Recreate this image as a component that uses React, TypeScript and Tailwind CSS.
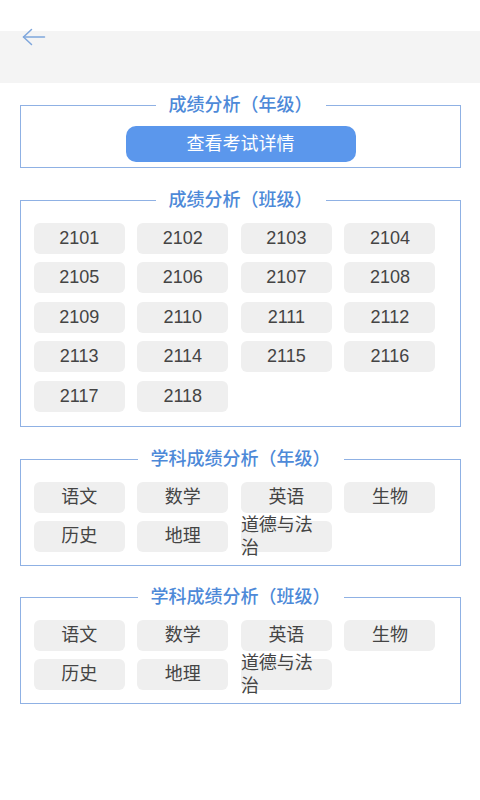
import React from "react";

const font = { fontFamily: '"Liberation Sans", "Noto Sans CJK SC", sans-serif' };

const classes = Array.from({ length: 18 }, (_, i) => String(2101 + i));
const subjects = ["语文", "数学", "英语", "生物", "历史", "地理", "道德与法治"];

const Section = ({ title, children, className = "" }: { title: string; children: React.ReactNode; className?: string }) => (
  <div className={`ml-[20px] mr-[19px] border border-[#8fb1e4] ${className}`}>
    <div className="flex justify-center -mt-[13px] h-[24px]">
      <span className="bg-white px-[13px] text-[18px] leading-[24px] font-medium text-[#4d89d8]">{title}</span>
    </div>
    {children}
  </div>
);

const Chip = ({ label }: { label: string }) => {
  const long = label.length > 4;
  return (
    <div
      className={`h-[31px] rounded-[6px] bg-[#efefef] text-[18px] text-[#444] flex items-center ${
        long ? "justify-start" : "justify-center"
      }`}
    >
      {long ? (
        <span className="w-[80px] leading-[23px] text-left pt-[1px] relative z-10">{label}</span>
      ) : (
        <span className="leading-[31px]">{label}</span>
      )}
    </div>
  );
};

const ChipGrid = ({ items }: { items: string[] }) => (
  <div className="grid grid-cols-[repeat(4,91px)] gap-x-[12.6px] gap-y-[8.4px] pl-[12.7px]">
    {items.map((it) => (
      <Chip key={it} label={it} />
    ))}
  </div>
);

export default function App() {
  return (
    <div className="w-[480px] h-[800px] bg-white overflow-hidden" style={font}>
      {/* header */}
      <div className="h-[31px] bg-white" />
      <div className="h-[52px] bg-[#f4f4f4] flex items-start">
        <svg width="24" height="18" viewBox="0 0 24 18" className="ml-[22px] -mt-[3px] shrink-0" fill="none" stroke="#7ea6dc" strokeWidth="1.5" strokeLinecap="round" strokeLinejoin="round">
          <path d="M1.5 9H22.5" />
          <path d="M9.5 1.5L1.5 9L9.5 16.5" />
        </svg>
      </div>

      {/* 成绩分析（年级） */}
      <Section title="成绩分析（年级）" className="mt-[22px] pb-[5px]">
        <div className="flex justify-center mt-[9px]">
          <button className="w-[230px] h-[36px] rounded-[10px] bg-[#5b97ec] text-white text-[18px] leading-[36px]">查看考试详情</button>
        </div>
      </Section>

      {/* 成绩分析（班级） */}
      <Section title="成绩分析（班级）" className="mt-[32px] pb-[14px]">
        <div className="mt-[11px]">
          <ChipGrid items={classes} />
        </div>
      </Section>

      <Section title="学科成绩分析（年级）" className="mt-[32px] pb-[13px]">
        <div className="mt-[11px]">
          <ChipGrid items={subjects} />
        </div>
      </Section>

      <Section title="学科成绩分析（班级）" className="mt-[31px] pb-[13px]">
        <div className="mt-[11px]">
          <ChipGrid items={subjects} />
        </div>
      </Section>
    </div>
  );
}
